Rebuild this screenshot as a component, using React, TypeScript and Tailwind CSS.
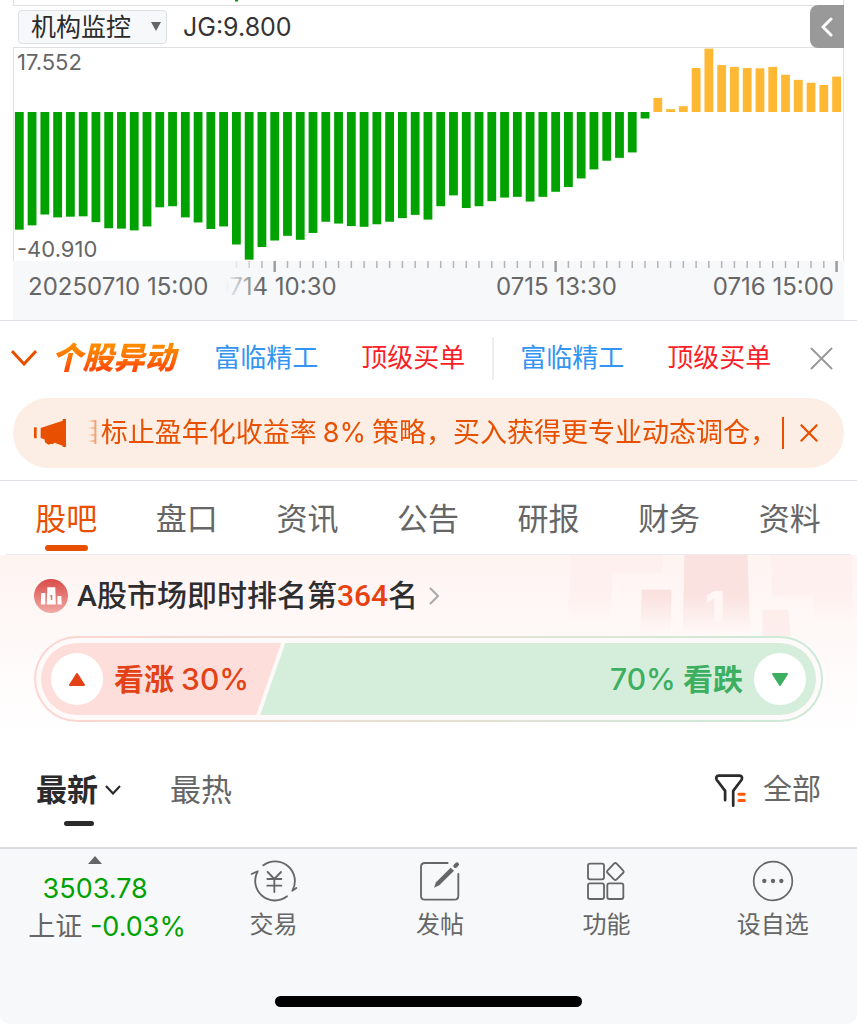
import React, { useState } from "react";

const SERIES: number[] = [
  -32.6, -31.4, -28.4, -29.2, -29, -28.9, -30.5, -32.2, -32.3, -32.8, -31.7, -26.4, -26.1, -29.2, -30.6,
  -32.4, -31.7, -36.7, -40.9, -37.4, -35.6, -34.3, -35.4, -33.5, -30.4, -30.9, -31.6, -31.8, -31.1, -30.4,
  -29.4, -28.5, -29.8, -26.1, -23.1, -26.6, -26.1, -24.7, -23.7, -23.5, -24.8, -23.5, -22.1, -20.8, -18.4,
  -15.9, -13.5, -12.7, -11.2, -1.8, 3.9, 0.8, 1.6, 12.2, 17.55, 13, 12.5, 12.2, 12.1, 12.5, 10.3, 8.9, 8.1,
  7.5, 9.8,
];

const UNIT = 3.61;
const ZERO = 64;
const PITCH = 12.77;
const barCenter = (i: number) => 5.3 + i * PITCH;
const MAJOR = [20, 42, 64];

function BarChart() {
  return (
    <svg viewBox="0 0 829 213" preserveAspectRatio="none" className="block h-[213px] w-full" aria-hidden="true">
      {SERIES.map((v, i) => (
        <rect
          key={i}
          x={barCenter(i) - 4.4}
          y={v < 0 ? ZERO : ZERO - v * UNIT}
          width={8.8}
          height={Math.abs(v) * UNIT}
          fill={v < 0 ? "#00a200" : "#ffb833"}
        />
      ))}
    </svg>
  );
}

function AxisTicks() {
  return (
    <svg viewBox="0 0 829 11" preserveAspectRatio="none" className="block h-[11px] w-full" aria-hidden="true">
      {SERIES.map((_, i) => {
        if (i < 17) return null;
        const major = MAJOR.includes(i);
        const w = major ? 2.4 : 1.5;
        return (
          <rect
            key={i}
            x={barCenter(i) - w / 2}
            y={0}
            width={w}
            height={major ? 11 : 7}
            fill={major ? "#999999" : "#b4b4b6"}
          />
        );
      })}
    </svg>
  );
}

function Indicator() {
  return (
    <section className="mx-[13px]">
      <div className="h-[6px] border-x border-b border-[#e0e0e3]">
        <svg viewBox="0 0 829 5" preserveAspectRatio="none" className="block h-[5px] w-full" aria-hidden="true">
          <rect x="221" y="0" width="3" height="1.5" fill="#00a200" />
        </svg>
      </div>
      <div className="relative flex h-[42px] items-center gap-4 border-r border-b border-[#e0e0e3] pl-[5px]">
        <div className="relative">
          <select
            aria-label="指标"
            className="h-[34px] w-[149px] appearance-none rounded-[4px] border border-[#dcdfe6] bg-[#f7f8fa] pl-3 text-[25px] leading-8 text-[#2b2b2b]"
          >
            <option>机构监控</option>
          </select>
          <svg viewBox="0 0 10 9" className="pointer-events-none absolute top-3 right-[6px] h-[9px] w-[10px]" aria-hidden="true">
            <path d="M0 0H10L5 9Z" fill="#666" />
          </svg>
        </div>
        <span className="text-[25px] leading-8 text-[#333]">JG:9.800</span>
        <button
          type="button"
          aria-label="收起"
          className="absolute -top-px -right-px flex h-[43px] w-[34px] items-center justify-center rounded-l-[8px] bg-[#999]"
        >
          <svg viewBox="0 0 12 20" className="h-5 w-3" fill="none" stroke="#fff" strokeWidth="3" strokeLinecap="round" strokeLinejoin="round" aria-hidden="true">
            <path d="M10 2L2 10L10 18" />
          </svg>
        </button>
      </div>
      <div className="relative border-x border-[#e0e0e3]">
        <BarChart />
        <span className="absolute top-0 left-[3px] text-[22px] leading-7 text-[#666]">17.552</span>
        <span className="absolute bottom-0 left-[3px] text-[22px] leading-6 text-[#666]">-40.910</span>
      </div>
      <div className="relative h-[59px] bg-[#f7f8fa] text-[24px] leading-7 text-[#666]">
        <div className="px-px">
          <AxisTicks />
        </div>
        <span className="absolute top-3 left-[31.6%] -translate-x-1/2 whitespace-nowrap">0714 10:30</span>
        <span className="absolute top-3 left-[65.4%] -translate-x-1/2 whitespace-nowrap">0715 13:30</span>
        <span className="absolute top-3 right-[10px] whitespace-nowrap">0716 15:00</span>
        <span className="absolute top-0 left-0 w-[250px] bg-linear-to-r from-[#f7f8fa] from-85% to-transparent pt-3 pb-3 pl-[15px] whitespace-nowrap">
          20250710 15:00
        </span>
      </div>
    </section>
  );
}

function Cross({ className }: { className: string }) {
  return (
    <svg viewBox="0 0 24 24" className={className} fill="none" stroke="currentColor" aria-hidden="true">
      <path d="M1 1L23 23M23 1L1 23" />
    </svg>
  );
}

function StockAlert() {
  return (
    <>
      <a href="#stock" className="text-[#3394f2]">富临精工</a>
      <a href="#order" className="text-[#fa1e28]">顶级买单</a>
    </>
  );
}

function Alerts() {
  return (
    <section className="border-y border-[#dfdfe6] pb-3">
      <div className="flex h-[77px] items-center justify-between pr-6 pb-[3px] pl-[11px] text-[26px] leading-9 whitespace-nowrap">
        <button type="button" aria-label="展开" className="-mr-6">
          <svg viewBox="0 0 26 16" className="h-4 w-[26px]" fill="none" stroke="#e85000" strokeWidth="3" aria-hidden="true">
            <path d="M1 1L13 14L25 1" />
          </svg>
        </button>
        <h2 className="-mr-1 bg-linear-to-b from-[#ff8a00] from-20% to-[#ff4d08] to-80% bg-clip-text pr-1 text-[31px] font-black text-transparent italic">
          个股异动
        </h2>
        <div className="flex items-center gap-[43px]">
          <StockAlert />
        </div>
        <div className="-mx-3 h-[43px] w-[2px] bg-[#eee]" />
        <div className="flex items-center gap-[43px]">
          <StockAlert />
        </div>
        <button type="button" aria-label="关闭异动" className="text-[#999]">
          <Cross className="h-[23px] w-[23px] stroke-2" />
        </button>
      </div>
      <div className="mx-[13px] flex h-[70px] items-center rounded-full bg-[#fceee5] pr-[26px] pl-[21px] text-[#e85000]">
        <svg viewBox="102 297 96 84" className="h-7 w-8 shrink-0" fill="currentColor" aria-hidden="true">
          <path d="M102 322H110V355H102ZM122 324L188 302V297H198V381H188V377L163 368L159 372H150L146 374L136 368L133 358L122 354Z" />
        </svg>
        <div className="mr-[5px] ml-[22px] flex min-w-0 flex-1 justify-end overflow-hidden text-[27px] leading-10 whitespace-nowrap [mask-image:linear-gradient(to_right,transparent,black_16px)]">
          <p>
            目标止盈年化收益率<span className="mx-[6px]">8%</span>策略，买入获得更专业动态调仓，
          </p>
        </div>
        <div className="h-8 w-[2px] bg-[#e85000]" />
        <button type="button" aria-label="关闭公告" className="ml-4">
          <Cross className="h-[18px] w-[18px] stroke-[3]" />
        </button>
      </div>
    </section>
  );
}

const TABS = ["股吧", "盘口", "资讯", "公告", "研报", "财务", "资料"];

function Tabs() {
  const [active, setActive] = useState(0);
  return (
    <nav className="mx-[6px] grid grid-cols-7 border-b-2 border-[#ebebee] pr-px">
      {TABS.map((t, i) => (
        <button
          key={t}
          type="button"
          onClick={() => setActive(i)}
          className={
            i === active
              ? "flex h-[73px] flex-col items-center pt-4 text-[31px] leading-11 text-[#e85000]"
              : "flex h-[73px] flex-col items-center pt-4 text-[31px] leading-11 text-[#666]"
          }
        >
          {t}
          {i === active && <span className="mt-1 h-[6px] w-[43px] rounded-full bg-[#e85000]" />}
        </button>
      ))}
    </nav>
  );
}

function PodiumBackdrop() {
  return (
    <svg viewBox="400 226 870 244" className="absolute top-0 right-1 h-[81px] w-[290px]" aria-hidden="true">
      <defs>
        <linearGradient id="soft" x1="0" y1="226" x2="0" y2="430" gradientUnits="userSpaceOnUse">
          <stop offset="0" stopColor="#fef0ee" />
          <stop offset="0.5" stopColor="#fef0ee" />
          <stop offset="1" stopColor="#fef0ee" stopOpacity="0" />
        </linearGradient>
        <linearGradient id="strong" x1="0" y1="226" x2="0" y2="460" gradientUnits="userSpaceOnUse">
          <stop offset="0" stopColor="#fae2e0" />
          <stop offset="0.5" stopColor="#fae2e0" />
          <stop offset="1" stopColor="#fae2e0" stopOpacity="0" />
        </linearGradient>
      </defs>
      <path d="M422 226H698V281H548L540 430H411Z" fill="url(#soft)" />
      <path d="M1024 226H1270V430H1160L1152 351H1028Z" fill="url(#soft)" />
      <path d="M636 330H725L722 460H631Z" fill="url(#strong)" />
      <path d="M764 226H954L962 460H759Z" fill="url(#strong)" />
      <path d="M999 392H1077L1084 470H999Z" fill="#fbe8e6" fillOpacity="0.6" />
      <text x="856" y="430" textAnchor="middle" fontSize="132" fontWeight="900" fill="#fff6f5">1</text>
    </svg>
  );
}

function RankBadge() {
  return (
    <svg viewBox="0 0 34 34" className="h-[34px] w-[34px]" aria-hidden="true">
      <defs>
        <linearGradient id="badge" x1="0" y1="0" x2="0" y2="1">
          <stop offset="0" stopColor="#d94b47" />
          <stop offset="1" stopColor="#f2aaa6" />
        </linearGradient>
      </defs>
      <circle cx="17" cy="17" r="17" fill="url(#badge)" />
      <path d="M7.3 14H11.3V25.6H6.8ZM13.3 8.3H21.3L21.8 25.6H12.8ZM23.5 17H27.3L27.8 25.6H23.5Z" fill="#fff" />
      <text x="17.2" y="20.5" textAnchor="middle" fontSize="8" fontWeight="700" fill="#d9605c">1</text>
    </svg>
  );
}

function Sentiment() {
  return (
    <section className="relative -mt-px h-[185px] bg-linear-to-b from-[#fef4f2] to-white px-[34px] pt-[17px]">
      <PodiumBackdrop />
      <a
        href="#rank"
        className="relative flex h-12 items-center font-['Roboto','Noto_Sans_CJK_SC',sans-serif] text-[30px] leading-12 font-medium text-[#2e2e30]"
      >
        <RankBadge />
        <span className="ml-[9px]">
          A股市场即时排名第<span className="text-[#e8400f]">364</span>名
        </span>
        <svg viewBox="0 0 10 18" className="ml-[11px] h-[18px] w-[10px]" fill="none" stroke="#aaa" strokeWidth="2" aria-hidden="true">
          <path d="M1 1L9 9L1 17" />
        </svg>
      </a>
      <div className="relative mt-4 rounded-full bg-linear-to-r from-[#fcd5d1] to-[#cbead6] p-[2px]">
        <div className="rounded-full bg-[#fffafa] p-[5px]">
          <div className="flex h-[72px] overflow-hidden rounded-full text-[30px] font-bold whitespace-nowrap">
            <button
              type="button"
              className="flex w-[31%] items-center gap-[11px] bg-[#fddeda] pl-[10px] text-[#e24216] [clip-path:polygon(0_0,100%_0,calc(100%-25px)_100%,0_100%)]"
            >
              <span className="flex h-[52px] w-[52px] shrink-0 items-center justify-center rounded-full bg-white">
                <svg viewBox="0 0 16 13" className="h-[13px] w-4" fill="currentColor" stroke="currentColor" strokeWidth="2" strokeLinejoin="round" aria-hidden="true">
                  <path d="M8 1L15 12H1Z" />
                </svg>
              </span>
              <span>
                看涨 <span className="font-medium">30%</span>
              </span>
            </button>
            <button
              type="button"
              className="-ml-[21px] flex flex-1 items-center justify-end gap-[11px] bg-[#d5eedc] pr-[10px] text-[#3daf61] [clip-path:polygon(25px_0,100%_0,100%_100%,0_100%)]"
            >
              <span>
                <span className="font-medium">70%</span> 看跌
              </span>
              <span className="flex h-[52px] w-[52px] shrink-0 items-center justify-center rounded-full bg-white">
                <svg viewBox="0 0 16 13" className="h-[13px] w-4" fill="currentColor" stroke="currentColor" strokeWidth="2" strokeLinejoin="round" aria-hidden="true">
                  <path d="M8 12L15 1H1Z" />
                </svg>
              </span>
            </button>
          </div>
        </div>
      </div>
    </section>
  );
}

function SortBar() {
  return (
    <section className="flex h-[107px] items-start justify-between px-9 pt-7 text-[31px] leading-11 text-[#666]">
      <div className="flex gap-[49px]">
        <button type="button" className="flex flex-col items-center font-bold text-[#2b2b2b]">
          <span className="flex items-center gap-[7px]">
            最新
            <svg viewBox="0 0 16 10" className="h-[10px] w-4" fill="none" stroke="currentColor" strokeWidth="2.2" aria-hidden="true">
              <path d="M1 1L8 8.5L15 1" />
            </svg>
          </span>
          <span className="mt-[9px] h-[5px] w-[30px] rounded-full bg-[#2b2b2b]" />
        </button>
        <button type="button" className="self-start">最热</button>
      </div>
      <button type="button" className="flex items-center gap-[17px] text-[29px]">
        <svg viewBox="856 100 92 98" className="h-[33px] w-[31px]" fill="none" strokeLinecap="round" strokeLinejoin="round" aria-hidden="true">
          <path d="M886 178V150L861 117Q857 106 867 105H929Q939 106 935 117L910 150V194" stroke="#2b2b2b" strokeWidth="8" />
          <path d="M927 160H943M927 179H943" stroke="#ff5a0a" strokeWidth="9" />
        </svg>
        全部
      </button>
    </section>
  );
}

const TRADE = (
  <svg viewBox="751 360 144 126" className="h-[42px] w-12" fill="none" stroke="currentColor" strokeWidth="5.5" strokeLinecap="round" strokeLinejoin="round" aria-hidden="true">
    <path d="M791 376A59 59 0 0 1 878 452L890 444M862 469A59 59 0 0 1 774 394L756 402" />
    <path d="M804 396L824 417L844 396M824 417V456M803 417H845M803 437H845" />
  </svg>
);
const POST = (
  <svg viewBox="-30 360 126 126" className="h-[42px] w-[42px]" fill="none" stroke="currentColor" strokeWidth="5.5" strokeLinecap="round" aria-hidden="true">
    <path d="M56 369H-12Q-24 369 -24 381V467Q-24 479 -12 479H76Q88 479 88 467V402" />
    <path d="M79 378L84 373" strokeWidth="12" />
    <path d="M15 443L21 427L65 383L75 392L31 436Z" fill="currentColor" stroke="none" />
  </svg>
);
const FEATURES = (
  <svg viewBox="470 360 126 126" className="h-[42px] w-[42px]" fill="none" stroke="currentColor" strokeWidth="5.5" strokeLinejoin="round" aria-hidden="true">
    <rect x="479" y="371" width="48" height="47" rx="6" />
    <rect x="479" y="430" width="48" height="47" rx="6" />
    <rect x="537" y="430" width="48" height="47" rx="6" />
    <path d="M557 371Q561 367 565 371L584 391Q588 395 584 399L565 418Q561 422 557 418L538 399Q534 395 538 391Z" />
  </svg>
);
const MORE = (
  <svg viewBox="967 360 126 126" className="h-[42px] w-[42px]" fill="none" stroke="currentColor" strokeWidth="5" aria-hidden="true">
    <circle cx="1030" cy="423" r="58" />
    <g fill="currentColor" stroke="none">
      <circle cx="1004" cy="423" r="6.5" />
      <circle cx="1030" cy="423" r="6.5" />
      <circle cx="1055" cy="423" r="6.5" />
    </g>
  </svg>
);

const ACTIONS = [
  { label: "交易", icon: TRADE },
  { label: "发帖", icon: POST },
  { label: "功能", icon: FEATURES },
  { label: "设自选", icon: MORE },
];

function BottomBar() {
  return (
    <footer className="rounded-b-[10px] border-t-2 border-[#dcdce0] bg-[#f7f8fa] pb-[17px]">
      <div className="grid h-[147px] grid-cols-5 items-start pr-px pl-6 text-[#666]">
        <button type="button" className="flex flex-col items-center pt-[7px] whitespace-nowrap">
          <span className="flex flex-col items-center pr-6">
            <svg viewBox="0 0 14 8" className="h-2 w-[14px]" fill="currentColor" aria-hidden="true">
              <path d="M7 0L14 8H0Z" />
            </svg>
            <span className="mt-[7px] text-[27px] leading-9 text-[#00a200]">3503.78</span>
          </span>
          <span className="text-[27px] leading-10">
            上证 <span className="text-[#00a200]">-0.03%</span>
          </span>
        </button>
        {ACTIONS.map((a) => (
          <button key={a.label} type="button" className="flex flex-col items-center gap-[5px] pt-[11px] text-[24px] leading-9">
            {a.icon}
            {a.label}
          </button>
        ))}
      </div>
      <div className="mx-auto h-[11px] w-[307px] rounded-full bg-black" />
    </footer>
  );
}

export default function App() {
  return (
    <main className="bg-white font-['Inter','Noto_Sans_CJK_SC',sans-serif]">
      <Indicator />
      <Alerts />
      <Tabs />
      <Sentiment />
      <SortBar />
      <BottomBar />
    </main>
  );
}
